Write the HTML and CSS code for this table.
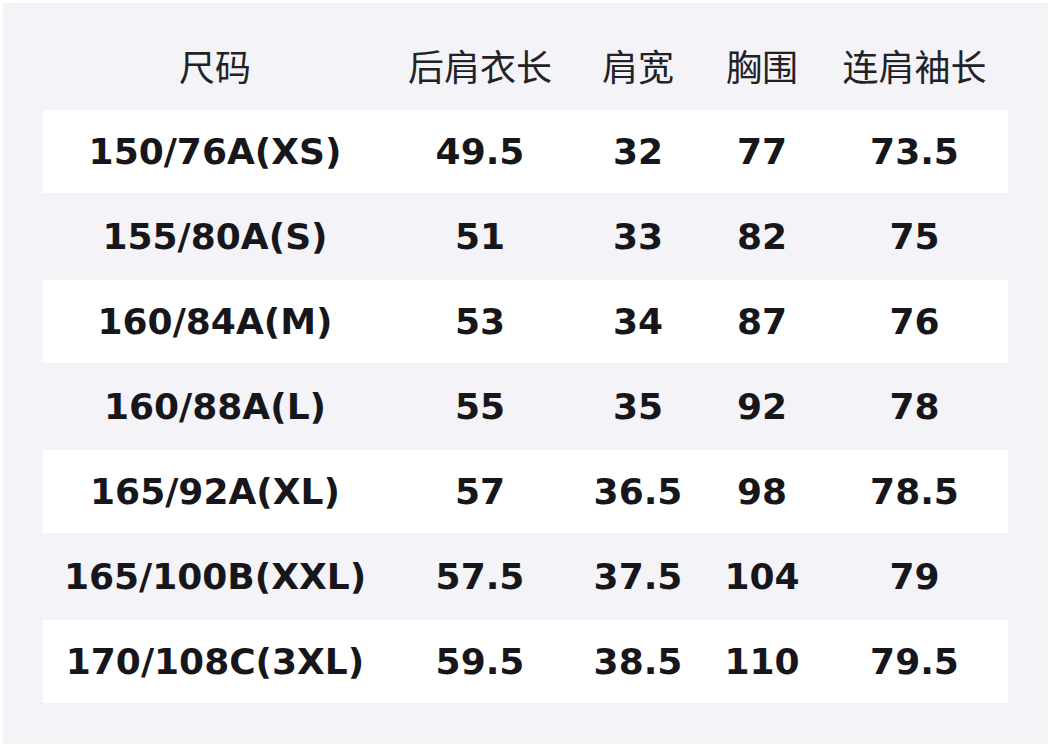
FILE: index.html
```html
<!DOCTYPE html>
<html lang="zh">
<head>
<meta charset="utf-8">
<title>尺码表</title>
<link rel="stylesheet" href="styles.css">
</head>
<body>
<div class="panel">
  <div class="table">
    <div class="row head">
      <div class="cell">尺码</div><div class="cell">后肩衣长</div><div class="cell">肩宽</div><div class="cell">胸围</div><div class="cell">连肩袖长</div>
    </div>
    <div class="row odd">
      <div class="cell">150/76A(XS)</div><div class="cell">49.5</div><div class="cell">32</div><div class="cell">77</div><div class="cell">73.5</div>
    </div>
    <div class="row even">
      <div class="cell">155/80A(S)</div><div class="cell">51</div><div class="cell">33</div><div class="cell">82</div><div class="cell">75</div>
    </div>
    <div class="row odd">
      <div class="cell">160/84A(M)</div><div class="cell">53</div><div class="cell">34</div><div class="cell">87</div><div class="cell">76</div>
    </div>
    <div class="row even">
      <div class="cell">160/88A(L)</div><div class="cell">55</div><div class="cell">35</div><div class="cell">92</div><div class="cell">78</div>
    </div>
    <div class="row odd">
      <div class="cell">165/92A(XL)</div><div class="cell">57</div><div class="cell">36.5</div><div class="cell">98</div><div class="cell">78.5</div>
    </div>
    <div class="row even">
      <div class="cell">165/100B(XXL)</div><div class="cell">57.5</div><div class="cell">37.5</div><div class="cell">104</div><div class="cell">79</div>
    </div>
    <div class="row odd">
      <div class="cell">170/108C(3XL)</div><div class="cell">59.5</div><div class="cell">38.5</div><div class="cell">110</div><div class="cell">79.5</div>
    </div>
  </div>
</div>
</body>
</html>
```
FILE: styles.css
```css
html, body {
  margin: 0;
  padding: 0;
  background: #ffffff;
}
body {
  padding: 3px;
  width: 1045px;
  height: 742px;
}
.panel {
  width: 1045px;
  height: 741px;
  box-sizing: border-box;
  background: #f3f3f8;
  padding: 22px 40px 0 40px;
}
.table {
  width: 965px;
  display: flex;
  flex-direction: column;
}
.row {
  display: grid;
  grid-template-columns: 344px 186px 130px 118px 187px;
  align-items: center;
}
.cell {
  text-align: center;
  white-space: nowrap;
}
.head {
  height: 85px;
  box-sizing: border-box;
  padding-bottom: 5px;
  font-family: "Noto Sans CJK SC", "Noto Sans", sans-serif;
  font-size: 36px;
  font-weight: 400;
  color: #222226;
}
.odd, .even {
  font-family: "DejaVu Sans", "Noto Sans", sans-serif;
  font-weight: 700;
  font-size: 36px;
  color: #17171b;
}
.odd {
  height: 83px;
  background: #ffffff;
}
.even {
  height: 87px;
}
```
